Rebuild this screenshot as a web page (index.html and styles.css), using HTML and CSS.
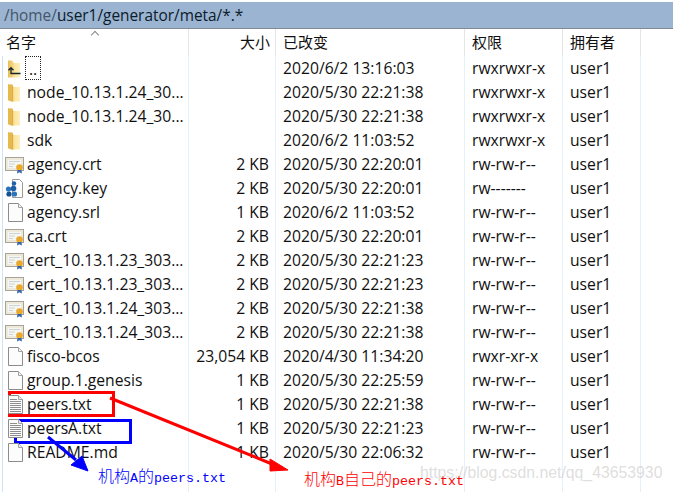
FILE: index.html
```html
<!DOCTYPE html>
<html lang="zh">
<head>
<meta charset="utf-8">
<title>meta</title>
<link rel="stylesheet" href="styles.css">
</head>
<body>
<svg class="defs" width="0" height="0" aria-hidden="true">
  <defs>
    <linearGradient id="fold" x1="0" y1="0" x2="1" y2="0"><stop offset="0" stop-color="#e8bd58"/><stop offset=".35" stop-color="#f3d27c"/><stop offset=".6" stop-color="#fce6a2"/><stop offset="1" stop-color="#fdf0bd"/></linearGradient>
    <symbol id="folder" viewBox="0 0 20 20">
      <path d="M3 2.500h4l2 2.500h6v14.500H5.500L3 18z" fill="url(#fold)"/>
      <path d="M3 2.500h4l1 1.200v16L3 18z" fill="#e6b850"/>
      <path d="M8 4.500l-1-1v16l1 .2z" fill="#d8a63d" opacity=".6"/>
    </symbol>
    <symbol id="up" viewBox="0 0 20 20">
      <path d="M3 2.500h4l2 2.500h6v14.500H3z" fill="url(#fold)"/>
      <path d="M6 10v5.500h9.500M3.500 12.300L6 9.700l2.500 2.600" fill="none" stroke="#16262f" stroke-width="1.300"/>
    </symbol>
    <symbol id="page" viewBox="0 0 20 20">
      <path d="M3.500 1.500h10l4 4v14h-14z" fill="#fcfcfc" stroke="#8c8c8c"/>
      <path d="M13.500 1.500v4h4" fill="#efefef" stroke="#a2a2a2"/>
    </symbol>
    <symbol id="text" viewBox="0 0 20 20">
      <path d="M3.500 1.500h10l4 4v14h-14z" fill="#fcfcfc" stroke="#8c8c8c"/>
      <path d="M13.500 1.500v4h4" fill="#efefef" stroke="#a2a2a2"/>
      <path d="M5 5.500h7M5 7.500h11M5 9.500h11M5 11.500h11M5 13.500h11M5 15.500h11M5 17.500h11" stroke="#8e8e8e"/>
    </symbol>
    <symbol id="cert" viewBox="0 0 20 20">
      <rect x=".5" y="3.500" width="18" height="13" fill="#f8f6ee" stroke="#a8a294"/>
      <rect x="2" y="5" width="15" height="10" fill="none" stroke="#e2dcc8"/>
      <path d="M4 7.500h11M4 10h6M4 12.500h4" stroke="#c6d4de"/>
      <circle cx="14.500" cy="13.500" r="3.300" fill="#e8a92c"/>
      <path d="M12.500 16l-.5 3.500 2.500-1.200 2.500 1.200-.5-3.500z" fill="#3566b0"/>
    </symbol>
    <symbol id="key" viewBox="0 0 20 20">
      <path d="M7.500 1.500h7l3 3v15h-10z" fill="#fcfcfc" stroke="#9a9a9a"/>
      <circle cx="9" cy="5.500" r="2.200" fill="#1f5fa8"/>
      <circle cx="3.500" cy="11" r="2.600" fill="#2a73bd"/>
      <circle cx="8.500" cy="10.500" r="2.800" fill="#1b5da6"/>
      <circle cx="4" cy="16" r="2.600" fill="#17508f"/>
      <circle cx="9.500" cy="16" r="2.600" fill="#2a73bd"/>
    </symbol>
  </defs>
</svg>

<main class="window">
  <header class="path"><span class="path-dim">/home/</span>user1/generator/meta/*.*</header>
  <div class="row head">
    <div class="cell name">名字<span class="sort"></span></div>
    <div class="cell size">大小</div>
    <div class="cell date">已改变</div>
    <div class="cell perm">权限</div>
    <div class="cell own">拥有者</div>
  </div>
  <div class="list">
    <div class="row"><div class="cell name"><svg class="ico"><use href="#up"/></svg><span class="focus">..</span></div><div class="cell size"></div><div class="cell date">2020/6/2 13:16:03</div><div class="cell perm">rwxrwxr-x</div><div class="cell own">user1</div></div>
    <div class="row"><div class="cell name"><svg class="ico"><use href="#folder"/></svg>node_10.13.1.24_30...</div><div class="cell size"></div><div class="cell date">2020/5/30 22:21:38</div><div class="cell perm">rwxrwxr-x</div><div class="cell own">user1</div></div>
    <div class="row"><div class="cell name"><svg class="ico"><use href="#folder"/></svg>node_10.13.1.24_30...</div><div class="cell size"></div><div class="cell date">2020/5/30 22:21:38</div><div class="cell perm">rwxrwxr-x</div><div class="cell own">user1</div></div>
    <div class="row"><div class="cell name"><svg class="ico"><use href="#folder"/></svg>sdk</div><div class="cell size"></div><div class="cell date">2020/6/2 11:03:52</div><div class="cell perm">rwxrwxr-x</div><div class="cell own">user1</div></div>
    <div class="row"><div class="cell name"><svg class="ico"><use href="#cert"/></svg>agency.crt</div><div class="cell size">2 KB</div><div class="cell date">2020/5/30 22:20:01</div><div class="cell perm">rw-rw-r--</div><div class="cell own">user1</div></div>
    <div class="row"><div class="cell name"><svg class="ico"><use href="#key"/></svg>agency.key</div><div class="cell size">2 KB</div><div class="cell date">2020/5/30 22:20:01</div><div class="cell perm">rw-------</div><div class="cell own">user1</div></div>
    <div class="row"><div class="cell name"><svg class="ico"><use href="#page"/></svg>agency.srl</div><div class="cell size">1 KB</div><div class="cell date">2020/6/2 11:03:52</div><div class="cell perm">rw-rw-r--</div><div class="cell own">user1</div></div>
    <div class="row"><div class="cell name"><svg class="ico"><use href="#cert"/></svg>ca.crt</div><div class="cell size">2 KB</div><div class="cell date">2020/5/30 22:20:01</div><div class="cell perm">rw-rw-r--</div><div class="cell own">user1</div></div>
    <div class="row"><div class="cell name"><svg class="ico"><use href="#cert"/></svg>cert_10.13.1.23_303...</div><div class="cell size">2 KB</div><div class="cell date">2020/5/30 22:21:23</div><div class="cell perm">rw-rw-r--</div><div class="cell own">user1</div></div>
    <div class="row"><div class="cell name"><svg class="ico"><use href="#cert"/></svg>cert_10.13.1.23_303...</div><div class="cell size">2 KB</div><div class="cell date">2020/5/30 22:21:23</div><div class="cell perm">rw-rw-r--</div><div class="cell own">user1</div></div>
    <div class="row"><div class="cell name"><svg class="ico"><use href="#cert"/></svg>cert_10.13.1.24_303...</div><div class="cell size">2 KB</div><div class="cell date">2020/5/30 22:21:38</div><div class="cell perm">rw-rw-r--</div><div class="cell own">user1</div></div>
    <div class="row"><div class="cell name"><svg class="ico"><use href="#cert"/></svg>cert_10.13.1.24_303...</div><div class="cell size">2 KB</div><div class="cell date">2020/5/30 22:21:38</div><div class="cell perm">rw-rw-r--</div><div class="cell own">user1</div></div>
    <div class="row"><div class="cell name"><svg class="ico"><use href="#page"/></svg>fisco-bcos</div><div class="cell size">23,054 KB</div><div class="cell date">2020/4/30 11:34:20</div><div class="cell perm">rwxr-xr-x</div><div class="cell own">user1</div></div>
    <div class="row"><div class="cell name"><svg class="ico"><use href="#page"/></svg>group.1.genesis</div><div class="cell size">1 KB</div><div class="cell date">2020/5/30 22:25:59</div><div class="cell perm">rw-rw-r--</div><div class="cell own">user1</div></div>
    <div class="row"><div class="cell name"><svg class="ico"><use href="#text"/></svg>peers.txt</div><div class="cell size">1 KB</div><div class="cell date">2020/5/30 22:21:38</div><div class="cell perm">rw-rw-r--</div><div class="cell own">user1</div></div>
    <div class="row"><div class="cell name"><svg class="ico"><use href="#text"/></svg>peersA.txt</div><div class="cell size">1 KB</div><div class="cell date">2020/5/30 22:21:23</div><div class="cell perm">rw-rw-r--</div><div class="cell own">user1</div></div>
    <div class="row"><div class="cell name"><svg class="ico"><use href="#page"/></svg>README.md</div><div class="cell size">1 KB</div><div class="cell date">2020/5/30 22:06:32</div><div class="cell perm">rw-rw-r--</div><div class="cell own">user1</div></div>
    <div class="row tail"><div class="cell name"></div><div class="cell size"></div><div class="cell date"></div><div class="cell perm"></div><div class="cell own"></div></div>
  </div>
</main>

<svg class="marks" viewBox="0 0 673 492" aria-hidden="true">
  <rect x="9.500" y="392.500" width="104" height="23" fill="none" stroke="#ff0000" stroke-width="3"/>
  <rect x="15.500" y="420.500" width="115" height="22" fill="none" stroke="#0000ff" stroke-width="3"/>
  <path d="M110 398L272 464" stroke="#ff0000" stroke-width="3"/>
  <path d="M288 470L270 459 270 471z" fill="#ff0000" stroke="#ff0000"/>
  <path d="M48 437L76 460" stroke="#0000ff" stroke-width="3"/>
  <path d="M88 471L71 465 82 456z" fill="#0000ff" stroke="#0000ff"/>
</svg>
<p class="note note-blue">机构<span class="mono">A</span>的<span class="mono">peers.txt</span></p>
<p class="note note-red">机构<span class="mono">B</span>自己的<span class="mono">peers.txt</span></p>
<p class="watermark">https://blog.csdn.net/qq_43653930</p>
</body>
</html>
```
FILE: styles.css
```css
* { box-sizing: border-box; }
html, body { margin: 0; padding: 0; }
body {
  width: 673px;
  height: 492px;
  overflow: hidden;
  position: relative;
  background: #fff;
  color: #101010;
  font: 15.7px/24px "Open Sans", "Noto Sans CJK SC", sans-serif;
}
.defs { position: absolute; }
.window { padding-top: 2px; }
.path {
  height: 27px;
  background: #9ab4d2;
  border-bottom: 1px solid #7f8a96;
  padding-left: 4px;
  font-size: 15.4px;
  line-height: 27px;
  color: #0c1a2a;
}
.path-dim { color: #46566a; }
.row {
  display: grid;
  grid-template-columns: 189px 87px 189px 98px 78px;
  height: 24px;
}
.head { height: 27px; font-size: 15px; }
.head .cell { border-right-color: #e4e4e4; line-height: 29px; }
.list { position: relative; }
.list::before {
  content: "";
  position: absolute;
  left: 2px;
  top: 0;
  bottom: 0;
  width: 1px;
  background: #cfe2f7;
}
.tail { height: 28px; }
.cell {
  border-right: 1px solid #e6f0fb;
  padding-left: 7px;
  white-space: nowrap;
  overflow: hidden;
  display: flex;
  align-items: center;
}
.head .name { position: relative; }
.size { justify-content: flex-end; padding: 0 6px 0 0; }
.name { padding-left: 5px; }
.head .name { padding-left: 6px; }
.ico { width: 20px; height: 20px; margin-right: 2px; flex: none; position: relative; z-index: 1; }
.head .size { padding-right: 5px; }
.focus {
  outline: 1px dotted #222;
  margin-left: -1px;
  padding: 0 3px;
  height: 22px;
  line-height: 24px;
}
.sort {
  position: absolute;
  left: 92px;
  top: 3px;
  width: 6px;
  height: 6px;
  border-top: 1px solid #8a8a8a;
  border-left: 1px solid #8a8a8a;
  transform: rotate(45deg);
}
.marks {
  position: absolute;
  left: 0;
  top: 0;
  width: 673px;
  height: 492px;
}
.note {
  position: absolute;
  margin: 0;
  font: 16px/18px "Noto Sans CJK SC", sans-serif;
  font-weight: 300;
  white-space: nowrap;
}
.mono { font: 13.33px/18px "Liberation Mono", monospace; }
.note-blue { left: 98px; top: 466px; color: #0000ff; }
.note-red { left: 304px; top: 469px; color: #ff0000; }
.watermark {
  position: absolute;
  margin: 0;
  left: 420px;
  top: 463px;
  font: 15.8px/20px "Liberation Sans", sans-serif;
  color: rgba(170,170,170,.4);
  white-space: nowrap;
}
```
